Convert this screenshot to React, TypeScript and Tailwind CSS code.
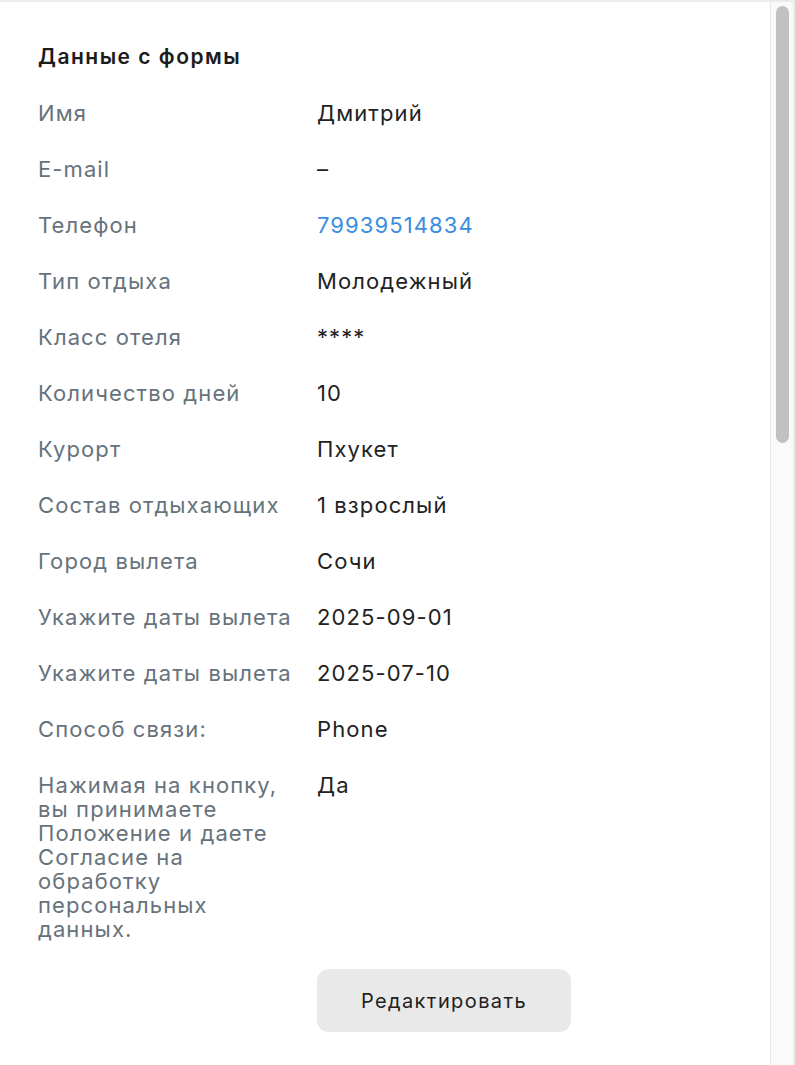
import React from "react";

const rows: { label: string; value: string; link?: boolean }[] = [
  { label: "Имя", value: "Дмитрий" },
  { label: "E-mail", value: "–" },
  { label: "Телефон", value: "79939514834", link: true },
  { label: "Тип отдыха", value: "Молодежный" },
  { label: "Класс отеля", value: "****" },
  { label: "Количество дней", value: "10" },
  { label: "Курорт", value: "Пхукет" },
  { label: "Состав отдыхающих", value: "1 взрослый" },
  { label: "Город вылета", value: "Сочи" },
  { label: "Укажите даты вылета", value: "2025-09-01" },
  { label: "Укажите даты вылета", value: "2025-07-10" },
  { label: "Способ связи:", value: "Phone" },
  {
    label:
      "Нажимая на кнопку, вы принимаете Положение и даете Согласие на обработку персональных данных.",
    value: "Да",
  },
];

export default function App() {
  return (
    <div
      className="w-[795px] h-[1065px] flex overflow-hidden bg-white border-t-2 border-[#ececec]"
      style={{ fontFamily: "Inter, 'Noto Sans', sans-serif" }}
    >
      <div className="flex-1 pl-[38px] pt-[41px]">
        <h2 className="text-[21px] leading-[28px] font-semibold tracking-[1.5px] text-[#1c1c1c]">
          Данные с формы
        </h2>
        <div className="mt-[14px]">
          {rows.map((r, i) => (
            <div
              key={i}
              className="flex py-4 text-[22px] leading-[24px] tracking-[1.1px]"
            >
              <div className="w-[262px] shrink-0 text-[#66727c]">{r.label}</div>
              <div
                className={
                  "ml-[17px] " + (r.link ? "text-[#3b8de0]" : "text-[#222]")
                }
              >
                {r.value}
              </div>
            </div>
          ))}
        </div>
        <div className="pl-[279px] mt-[12px]">
          <button className="w-[254px] h-[63px] rounded-[12px] bg-[#e9e9e9] text-[20px] tracking-[1.4px] text-[#222]">
            Редактировать
          </button>
        </div>
      </div>
      <div className="w-[25px] shrink-0 bg-[#fafafa] border-l border-[#e6e6e6] border-r-2 border-r-[#ececec] pt-[4px] pl-[5px]">
        <div className="w-[13px] h-[437px] rounded-full bg-[#c1c1c1]" />
      </div>
    </div>
  );
}
